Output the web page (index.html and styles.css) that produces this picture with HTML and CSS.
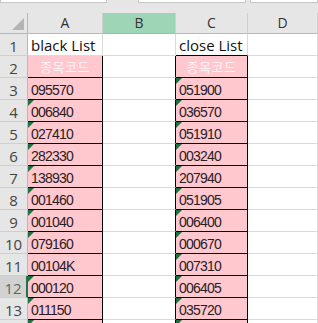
FILE: index.html
```html
<!DOCTYPE html>
<html>
<head>
  <meta charset="utf-8">
  <title>Sheet</title>
  <link rel="stylesheet" href="styles.css">
</head>
<body>
  <div class="ribbon">
    <span class="box box-name"></span>
    <span class="box box-fx"></span>
    <span class="box box-end"></span>
  </div>
  <table class="sheet">
    <colgroup>
      <col class="col-hd"><col class="col-a"><col class="col-b"><col class="col-c"><col class="col-d">
    </colgroup>
    <thead>
      <tr><th class="corner"><span class="tri"></span></th><th>A</th><th class="sel">B</th><th>C</th><th>D</th></tr>
    </thead>
    <tbody>
      <tr><th>1</th><td class="label">black List</td><td></td><td class="label lid">close List</td><td></td></tr>
      <tr><th>2</th><td class="hit title">종목코드</td><td class="edge"></td><td class="hit title">종목코드</td><td></td></tr>
      <tr><th>3</th><td class="hit">095570</td><td class="edge"></td><td class="hit flag">051900</td><td></td></tr>
      <tr><th>4</th><td class="hit flag">006840</td><td class="edge"></td><td class="hit flag">036570</td><td></td></tr>
      <tr><th>5</th><td class="hit flag">027410</td><td class="edge"></td><td class="hit flag">051910</td><td></td></tr>
      <tr><th>6</th><td class="hit flag">282330</td><td class="edge"></td><td class="hit flag">003240</td><td></td></tr>
      <tr><th>7</th><td class="hit flag">138930</td><td class="edge"></td><td class="hit flag">207940</td><td></td></tr>
      <tr><th>8</th><td class="hit flag">001460</td><td class="edge"></td><td class="hit flag">051905</td><td></td></tr>
      <tr><th>9</th><td class="hit flag">001040</td><td class="edge"></td><td class="hit flag">006400</td><td></td></tr>
      <tr><th>10</th><td class="hit flag">079160</td><td class="edge"></td><td class="hit flag">000670</td><td></td></tr>
      <tr><th>11</th><td class="hit">00104K</td><td class="edge"></td><td class="hit flag">007310</td><td></td></tr>
      <tr><th class="cur">12</th><td class="hit flag">000120</td><td class="edge"></td><td class="hit flag">006405</td><td></td></tr>
      <tr><th>13</th><td class="hit flag">011150</td><td class="edge"></td><td class="hit flag">035720</td><td></td></tr>
      <tr><th></th><td class="hit flag"></td><td class="edge"></td><td class="hit flag"></td><td></td></tr>
    </tbody>
  </table>
</body>
</html>
```

FILE: styles.css
```css
html, body {margin: 0; padding: 0; background: #fff; overflow: hidden;}
body {width: 318px; height: 323px;}

.ribbon {display: flex; height: 13px; background: #e6e6e6;}
.box {height: 3px; background: #fff; border: 1px solid #c6c6c6; border-top: none; box-sizing: border-box;}
.box-name {width: 107px;}
.box-fx {width: 108px; margin-left: 31px;}
.box-end {flex: 1; margin-left: 4px;}

.sheet {border-collapse: separate; border-spacing: 0; table-layout: fixed; width: 318px;}
.col-hd {width: 28px;}
.col-a {width: 75px;}
.col-b {width: 73px;}
.col-c {width: 72px;}
.col-d {width: 70px;}

.sheet th, .sheet td {box-sizing: border-box; padding: 0; white-space: nowrap; overflow: hidden;}

.sheet thead th {height: 21px; background: #e6e6e6; border-right: 1px solid #cfcfcf; border-bottom: 1px solid #b8b8b8;
  font: 400 14px "Open Sans", sans-serif; color: #333; text-align: center; line-height: 18px;}
.sheet thead th.sel {background: #9fd5b7; border-bottom-color: #8fc7a6;}
.sheet thead th.corner {position: relative; border-right-color: #b8b8b8;}
.tri {position: absolute; right: 3px; bottom: 3px; width: 0; height: 0;
  border-left: 12px solid transparent; border-bottom: 12px solid #b4b4b4;}

.sheet tbody tr {height: 22px;}
.sheet tbody th {height: 22px; background: #e6e6e6; border-right: 1px solid #b8b8b8; border-bottom: 1px solid #cfcfcf;
  font: 400 15px "Open Sans", sans-serif; color: #444; text-align: center; line-height: 18px; padding-top: 2px;}
.sheet tbody th.cur {background: #d2d2d2; color: #5a6a60; border-right: 2px solid #217346;}

.sheet td {height: 22px; border-right: 1px solid #dadada; border-bottom: 1px solid #dadada;
  font: 400 14px "Liberation Sans", Arial, sans-serif; letter-spacing: -0.8px; color: #2a1c1f;
  line-height: 16px; padding: 3px 0 0 3px; vertical-align: middle;}
.sheet td.label {font: 400 15px "Open Sans", sans-serif; color: #111; letter-spacing: 0; line-height: 18px; padding: 1px 0 0 3px;}
.sheet td.lid {border-bottom-color: #000;}
.sheet td.edge {border-right-color: #000;}
.sheet td.hit {position: relative; background: #ffc7ce; border-right-color: #000; border-bottom-color: #000;}
.sheet td.title {font: 400 13px "Noto Sans CJK KR", sans-serif; color: #fff3f5; text-align: center;
  letter-spacing: 0.5px; line-height: 18px; padding: 0;}
.sheet td.flag::before {content: ""; position: absolute; top: 0; left: 0; width: 0; height: 0;
  border-top: 6px solid #1f7040; border-right: 6px solid transparent;}
```
